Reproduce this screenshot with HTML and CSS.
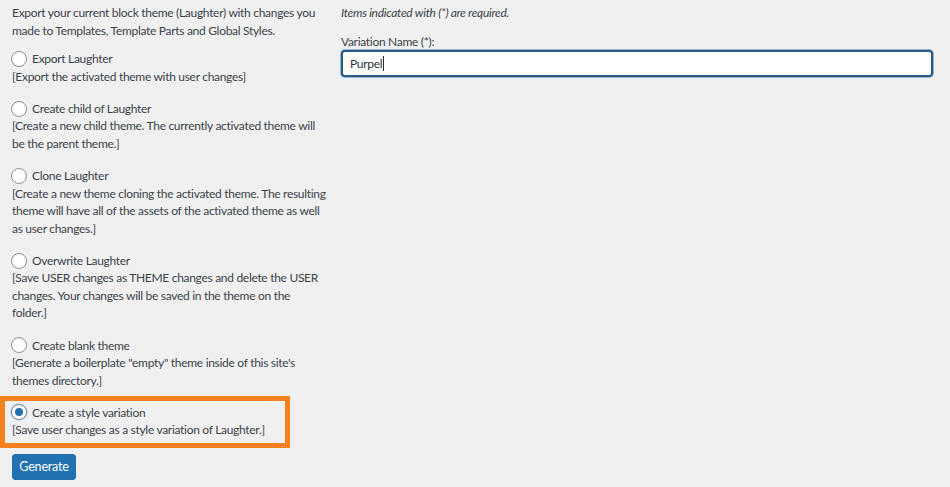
FILE: index.html
```html
<!DOCTYPE html>
<html lang="en">
<head>
<meta charset="utf-8">
<title>Create Block Theme</title>
<link rel="stylesheet" href="styles.css">
</head>
<body>
<div class="page">
  <div class="left">
    <p class="intro">Export your current block theme (Laughter) with changes you<br>made to Templates, Template Parts and Global Styles.</p>

    <div class="option">
      <div class="opt-label"><span class="radio"></span>Export Laughter</div>
      <div class="opt-desc">[Export the activated theme with user changes]</div>
    </div>

    <div class="option">
      <div class="opt-label"><span class="radio"></span>Create child of Laughter</div>
      <div class="opt-desc">[Create a new child theme. The currently activated theme will<br>be the parent theme.]</div>
    </div>

    <div class="option">
      <div class="opt-label"><span class="radio"></span>Clone Laughter</div>
      <div class="opt-desc">[Create a new theme cloning the activated theme. The resulting<br>theme will have all of the assets of the activated theme as well<br>as user changes.]</div>
    </div>

    <div class="option">
      <div class="opt-label"><span class="radio"></span>Overwrite Laughter</div>
      <div class="opt-desc">[Save USER changes as THEME changes and delete the USER<br>changes. Your changes will be saved in the theme on the<br>folder.]</div>
    </div>

    <div class="option">
      <div class="opt-label"><span class="radio"></span>Create blank theme</div>
      <div class="opt-desc">[Generate a boilerplate "empty" theme inside of this site's<br>themes directory.]</div>
    </div>

    <div class="option option-last">
      <div class="highlight"></div>
      <div class="opt-label"><span class="radio checked"></span>Create a style variation</div>
      <div class="opt-desc">[Save user changes as a style variation of Laughter.]</div>
    </div>

    <button class="btn" type="button">Generate</button>
  </div>

  <div class="right">
    <p class="note">Items indicated with (*) are required.</p>
    <label class="field-label">Variation Name (*):</label>
    <div class="input">Purpel<span class="caret"></span></div>
  </div>
</div>
</body>
</html>
```
FILE: styles.css
```css
html, body {
  margin: 0;
  padding: 0;
  background: #f0f0f1;
}
body {
  font-family: Lato, "Open Sans", "Liberation Sans", sans-serif;
  font-size: 12px;
  letter-spacing: -0.3px;
  line-height: 17.5px;
  color: #3c434a;
  width: 950px;
  height: 487px;
  overflow: hidden;
}
.page {
  display: grid;
  grid-template-columns: 320px 592px;
  column-gap: 9px;
  padding: 4.25px 0 0 12px;
}
.left p, .right p { margin: 0; }
.intro, .opt-desc { white-space: nowrap; }
.option {
  position: relative;
  margin-top: 11px;
}
.option + .option { margin-top: 14.7px; }
.opt-label {
  display: flex;
  align-items: center;
  height: 17.5px;
}
.radio {
  box-sizing: border-box;
  width: 16px;
  height: 16px;
  border: 1px solid #8c8f94;
  border-radius: 50%;
  background: #fff;
  margin: 0 5px 0 -1px;
  flex: none;
  display: flex;
  align-items: center;
  justify-content: center;
}
.radio.checked { border-color: #7e8993; box-shadow: 0 0 0 1px #c3d9ed; }
.radio.checked::after {
  content: "";
  width: 8px;
  height: 8px;
  border-radius: 50%;
  background: #2271b1;
}
.highlight {
  position: absolute;
  left: -12px;
  top: -8px;
  width: 280px;
  height: 42px;
  border: 5px solid #f7811f;
  pointer-events: none;
}
.btn {
  margin-top: 15px;
  display: block;
  box-sizing: border-box;
  width: 64px;
  height: 26px;
  padding: 0;
  border: 1px solid #2271b1;
  border-radius: 3px;
  background: #2271b1;
  color: #fff;
  font-family: inherit;
  font-size: 12.5px;
  letter-spacing: -0.2px;
  line-height: 24px;
}
.note { font-style: italic; }
.field-label {
  display: block;
  margin-top: 11px;
}
.input {
  box-sizing: border-box;
  height: 27px;
  margin-top: 0;
  padding: 0 7px;
  background: #fff;
  border: 2px solid #2c5b80;
  border-radius: 4px;
  box-shadow: 0 0 0 1px #8fb6d8;
  line-height: 23px;
  color: #2c3338;
  display: flex;
  align-items: center;
}
.caret {
  display: inline-block;
  width: 1px;
  height: 15px;
  background: #2c3338;
  margin-left: 1px;
}
```
